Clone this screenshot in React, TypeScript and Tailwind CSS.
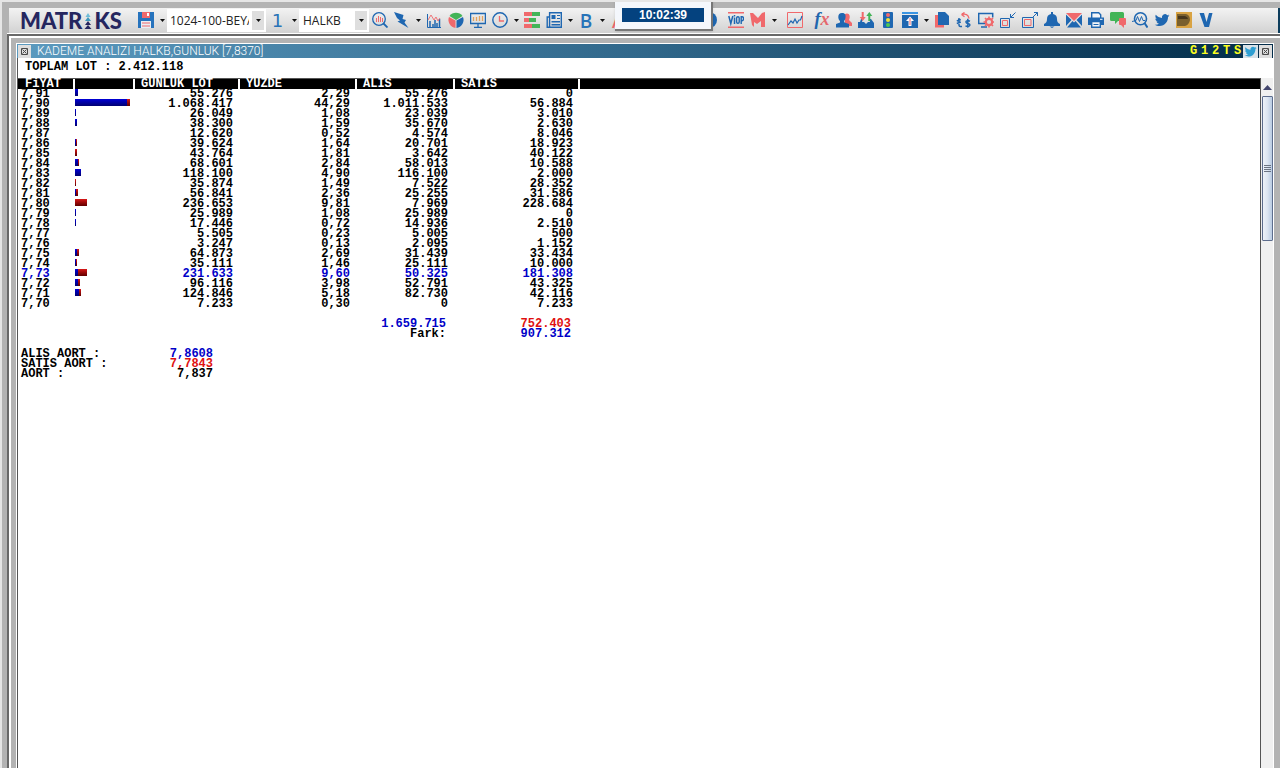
import { useState } from "react";
import type { ReactNode } from "react";

type Level = {
  price: string;
  lot: string;
  percent: string;
  buy: string;
  sell: string;
  active?: boolean;
};

const levels: Level[] = [
  { price: "7,91", lot: "55.276", percent: "2,29", buy: "55.276", sell: "0" },
  { price: "7,90", lot: "1.068.417", percent: "44,29", buy: "1.011.533", sell: "56.884" },
  { price: "7,89", lot: "26.049", percent: "1,08", buy: "23.039", sell: "3.010" },
  { price: "7,88", lot: "38.300", percent: "1,59", buy: "35.670", sell: "2.630" },
  { price: "7,87", lot: "12.620", percent: "0,52", buy: "4.574", sell: "8.046" },
  { price: "7,86", lot: "39.624", percent: "1,64", buy: "20.701", sell: "18.923" },
  { price: "7,85", lot: "43.764", percent: "1,81", buy: "3.642", sell: "40.122" },
  { price: "7,84", lot: "68.601", percent: "2,84", buy: "58.013", sell: "10.588" },
  { price: "7,83", lot: "118.100", percent: "4,90", buy: "116.100", sell: "2.000" },
  { price: "7,82", lot: "35.874", percent: "1,49", buy: "7.522", sell: "28.352" },
  { price: "7,81", lot: "56.841", percent: "2,36", buy: "25.255", sell: "31.586" },
  { price: "7,80", lot: "236.653", percent: "9,81", buy: "7.969", sell: "228.684" },
  { price: "7,79", lot: "25.989", percent: "1,08", buy: "25.989", sell: "0" },
  { price: "7,78", lot: "17.446", percent: "0,72", buy: "14.936", sell: "2.510" },
  { price: "7,77", lot: "5.505", percent: "0,23", buy: "5.005", sell: "500" },
  { price: "7,76", lot: "3.247", percent: "0,13", buy: "2.095", sell: "1.152" },
  { price: "7,75", lot: "64.873", percent: "2,69", buy: "31.439", sell: "33.434" },
  { price: "7,74", lot: "35.111", percent: "1,46", buy: "25.111", sell: "10.000" },
  { price: "7,73", lot: "231.633", percent: "9,60", buy: "50.325", sell: "181.308", active: true },
  { price: "7,72", lot: "96.116", percent: "3,98", buy: "52.791", sell: "43.325" },
  { price: "7,71", lot: "124.846", percent: "5,18", buy: "82.730", sell: "42.116" },
  { price: "7,70", lot: "7.233", percent: "0,30", buy: "0", sell: "7.233" },
];

const MAX_BAR = 55;
const toNumber = (value: string) => Number(value.replace(/\./g, ""));
const maxLot = Math.max(...levels.map((l) => toNumber(l.lot)));
const barWidth = (value: string) =>
  Math.round((toNumber(value) / maxLot) * MAX_BAR);

const BLUE = "#1f67b1";
const RED = "#f0696c";
const GREEN = "#43b457";

const Icon = ({ children }: { children: ReactNode }) => (
  <svg viewBox="0 0 16 16" className="h-4 w-4" fill="none" aria-hidden="true">
    {children}
  </svg>
);

const ToolButton = ({ label, children }: { label: string; children: ReactNode }) => (
  <button
    type="button"
    aria-label={label}
    title={label}
    className="flex h-full w-[22px] shrink-0 items-center justify-center pb-px"
  >
    <Icon>{children}</Icon>
  </button>
);

const Caret = () => (
  <svg viewBox="0 0 5 3" className="h-[3px] w-[5px]" aria-hidden="true">
    <path d="M0 0h5L2.5 3z" fill="#111" />
  </svg>
);

const MenuCaret = ({ label }: { label: string }) => (
  <button
    type="button"
    aria-label={`${label} menu`}
    className="flex h-full w-[10px] shrink-0 items-center justify-center pb-px"
  >
    <Caret />
  </button>
);

const TwitterBird = ({ color }: { color: string }) => (
  <path
    d="M15.5 3.6c-.5.3-1.100.4-1.700.5.6-.4 1-.9 1.300-1.600-.6.3-1.200.6-1.900.7A3 3 0 0 0 8 5.900C5.500 5.800 3.300 4.600 1.800 2.800c-.8 1.300-.4 3.100.9 4-.5 0-1-.2-1.400-.4 0 1.500 1 2.700 2.400 3-.4.1-.9.1-1.300 0 .4 1.200 1.500 2.100 2.800 2.100A6 6 0 0 1 .7 12.700c1.400.9 3 1.400 4.700 1.400 5.600 0 8.800-4.700 8.600-9 .6-.4 1.100-.9 1.500-1.500z"
    fill={color}
  />
);

const Logo = () => (
  <div
    aria-label="MATRIKS"
    className="flex w-[126px] shrink-0 items-center pl-[11px] font-['Lato'] text-[22px] leading-6 font-black text-[#25265f]"
  >
    <span>MATR</span>
    <svg viewBox="0 0 8 16" className="mx-0.5 h-4 w-2 shrink-0" aria-hidden="true">
      <path d="M4 0l2.500 4h-5z" fill="#6fbdd8" />
      <path d="M4 4l3 4H1z" fill="#3f98bb" />
      <path d="M4 8l3 4H1zM4 12l3.500 4h-7z" fill="#25265f" />
    </svg>
    <span>KS</span>
  </div>
);

const Toolbar = () => {
  const [page, setPage] = useState("1024-100-BEYAZ");
  const [symbol, setSymbol] = useState("HALKB");

  return (
    <header className="ml-[7px] flex h-[25px] items-center border-r-2 border-[#0d3d5c] bg-gradient-to-b from-[#f3f3f3] to-[#d2d2d2] font-['Open_Sans',sans-serif]">
      <Logo />
      <ToolButton label="Kaydet">
        <path d="M0 0h16v16H0z" fill="#2673bd" />
        <path d="M4 0h8v6H4z" fill={RED} />
        <path d="M9 1h2v3H9z" fill="#fff" />
        <path d="M3 9h10v7H3z" fill="#e9eef4" />
        <path d="M4 11h8M4 14h8" stroke={RED} strokeWidth="1" />
      </ToolButton>
      <MenuCaret label="Kaydet" />

      <div className="relative h-[23px] w-[99px] shrink-0">
        <select
          aria-label="Sayfa"
          value={page}
          onChange={(e) => setPage(e.target.value)}
          className="block h-full w-full appearance-none bg-white pr-[17px] pl-[3px] text-[12px] text-[#222]"
        >
          <option>1024-100-BEYAZ</option>
        </select>
        <span className="pointer-events-none absolute top-0.5 right-0.5 bottom-0.5 flex w-3 items-center justify-center bg-[#dedede]">
          <Caret />
        </span>
      </div>

      <button
        type="button"
        className="h-full w-[23px] shrink-0 text-center font-['DejaVu_Sans',sans-serif] text-[18px] leading-6 text-[#2873b8]"
      >
        1
      </button>
      <MenuCaret label="Sayfa no" />

      <div className="relative h-[23px] w-[70px] shrink-0">
        <select
          aria-label="Sembol"
          value={symbol}
          onChange={(e) => setSymbol(e.target.value)}
          className="block h-full w-full appearance-none bg-white pr-[17px] pl-1 text-[12px] text-[#222]"
        >
          <option>HALKB</option>
        </select>
        <span className="pointer-events-none absolute top-0.5 right-0.5 bottom-0.5 flex w-3 items-center justify-center bg-[#dedede]">
          <Caret />
        </span>
      </div>

      <ToolButton label="Ara">
        <circle cx="7" cy="7" r="6.300" stroke={BLUE} strokeWidth="1.300" />
        <path d="M11.500 11.500L15.500 15.500" stroke={BLUE} strokeWidth="1.800" />
        <path d="M4.500 6v4M6.500 4v6M8.500 5v5M10.500 6v4" stroke={RED} />
      </ToolButton>
      <ToolButton label="Hızlı emir">
        <path d="M0 0l9.500 3-1 4L12 8l-1.500 2.500 4 5.500L3.500 9.500l2.500-1L3 6z" fill={BLUE} />
      </ToolButton>
      <MenuCaret label="Hızlı emir" />
      <ToolButton label="Grafik">
        <path d="M1.500 2v13.500H15" stroke={BLUE} />
        <path d="M4 15V9M7 15v-3M9 15V8M11 15v-4M13.500 15V7" stroke={BLUE} strokeWidth="1.500" />
        <path d="M2 8l3-5 3 5 2-3 2 4 2-3" stroke={RED} strokeWidth=".9" />
      </ToolButton>
      <ToolButton label="Pasta grafik">
        <path d="M8 8L1.500 4a8 8 0 0 1 13 0z" fill={GREEN} />
        <path d="M7.500 8.500v7.400A8 8 0 0 1 1 5z" fill={RED} />
        <path d="M8.500 8.500L15 5a8 8 0 0 1-6.500 10.900z" fill={BLUE} />
      </ToolButton>
      <ToolButton label="Ekran">
        <path d="M.6 1.500h14.800v10H.6zM8 12v3M4 15.400h8" stroke={BLUE} strokeWidth="1.300" />
        <path d="M3.500 5v4M6.500 5v4M9.500 4v5M12.500 4v5" stroke="#e3a25d" strokeWidth="1.300" />
      </ToolButton>
      <ToolButton label="Saat">
        <circle cx="8" cy="8" r="7.200" stroke={BLUE} strokeWidth="1.400" />
        <path d="M7.500 4v5H12" stroke={RED} strokeWidth="1.300" />
      </ToolButton>
      <MenuCaret label="Saat" />
      <ToolButton label="Derinlik">
        <path d="M0 0h8v4H0zM0 12h8v4H0zM0 6h5v4H0z" fill={RED} />
        <path d="M8 0h8v4H8zM5 6h7v4H5zM8 12h8v4H8z" fill={GREEN} />
      </ToolButton>
      <ToolButton label="Haberler">
        <path d="M3.600.7h11.700v14.600H1.200V5h2.400zM3.600 5v10" stroke={BLUE} strokeWidth="1.400" />
        <path d="M5.500 3h4v4h-4zM11 3h3v1h-3zM11 6h3v1h-3zM5.500 9H14v1.500H5.500zM5.500 12H14v1.500H5.500z" fill={BLUE} />
      </ToolButton>
      <MenuCaret label="Haberler" />
      <button
        type="button"
        className="h-full w-[22px] shrink-0 text-center text-[19px] leading-6 font-semibold text-[#2873b8]"
      >
        B
      </button>
      <MenuCaret label="B" />
      <button
        type="button"
        className="h-full w-[22px] shrink-0 text-center text-[18px] leading-6 font-semibold text-[#f0696c]"
      >
        A
      </button>
      <div className="w-[69px] shrink-0" />
      <ToolButton label="Bilgi">
        <circle cx="8" cy="8" r="8" fill={BLUE} />
      </ToolButton>
      <div className="w-[5px] shrink-0" />
      <ToolButton label="VIOP">
        <path d="M0 0h16v1.500H0zM0 14.500h16V16H0z" fill={RED} />
        <path d="M.8 4l2 7.500L4.800 4M6.500 5.500V12M6.500 3v1.500" stroke={BLUE} strokeWidth="1.500" />
        <rect x="8.600" y="4.700" width="2.600" height="6.600" rx="1.300" stroke={BLUE} strokeWidth="1.400" />
        <path d="M13.200 12V4.700h.8a1.500 2 0 0 1 0 4h-.8" stroke={BLUE} strokeWidth="1.400" />
      </ToolButton>
      <ToolButton label="Matriks">
        <path d="M0 1h3l5 5 4-5 3-1v15h-4V9l-4 3-3-2v5l-2-2z" fill={RED} />
      </ToolButton>
      <MenuCaret label="Matriks" />
      <div className="w-[5px] shrink-0" />
      <ToolButton label="Çizgi grafik">
        <path d="M.5.500h15v15H.5z" stroke={RED} />
        <path d="M1 13l3-4 2 2 2-4 2 4 2-3 1.500 0L15 4" stroke={BLUE} strokeWidth="1.200" />
      </ToolButton>
      <div className="w-[5px] shrink-0" />
      <button
        type="button"
        className="h-full w-[22px] shrink-0 pb-1 text-center font-['Liberation_Serif',serif] text-[18px] leading-5 font-bold text-[#2166ad] italic"
      >
        f<span className="text-[#e4686d]">x</span>
      </button>
      <ToolButton label="Kullanıcılar">
        <path d="M9 2c4-2 6 2 4 6l3 3v3H9z" fill={RED} />
        <path d="M6 1c3 0 4 2 3.500 4.500C9.300 7 9 8 8 9l.5 1.500L13 12v3.500H0V12l4-1.500L4 9C2.800 8 2.300 6.500 2.300 5 2.300 2.500 3.500 1 6 1z" fill={BLUE} />
      </ToolButton>
      <ToolButton label="Al sat">
        <path d="M0 10h2l1-3h2L4 10h2l2 2 2-2h2l-1-3h2l3 4v5H0z" fill={BLUE} />
        <path d="M3.700 0h2v5h2L4.700 9l-3-4h2z" fill={RED} />
        <path d="M10.300 9h2V4h2l-3-4-3 4h2z" fill={GREEN} />
      </ToolButton>
      <ToolButton label="Trafik ışığı">
        <rect x="3" width="10" height="16" rx="1" fill={BLUE} />
        <circle cx="8" cy="3" r="2" fill={RED} />
        <circle cx="8" cy="8" r="2" fill="#f1df38" />
        <circle cx="8" cy="13" r="2" fill="#4dc951" />
      </ToolButton>
      <ToolButton label="Yükle">
        <path d="M0 0h16v2H0z" fill="#3b95e3" />
        <path d="M0 3h16v13H0z" fill={BLUE} />
        <path d="M8 4.500l4 4.500h-2.500v5h-3V9H4z" fill="#fff" />
        <path d="M8 6v7" stroke={RED} />
      </ToolButton>
      <MenuCaret label="Yükle" />
      <ToolButton label="Kopyala">
        <path d="M1 3h9v12.500H1z" fill={RED} />
        <path d="M4 0h7l4 4v9H4z" fill={BLUE} />
      </ToolButton>
      <ToolButton label="Döviz çevirici">
        <path d="M3 6v7q0 2 3 1.500M.8 9l4-1.500M.8 11.500l4-1.500" stroke={BLUE} strokeWidth="1.500" />
        <path d="M14 9.200c-5-2-5 1.800-2 2.300s2.500 4-2.500 2.500M11.800 6.800v9" stroke={BLUE} strokeWidth="1.500" />
        <path d="M5.500 2.500c4-1 7 0 7.500 4M5.500 2.500l3-2M5.500 2.500l3 2.300" stroke={RED} strokeWidth="1.400" />
      </ToolButton>
      <ToolButton label="Ekran ayarları">
        <path d="M9 11.500H.7V1.500h14v4M3 15h6" stroke={BLUE} strokeWidth="1.500" />
        <circle cx="11" cy="10" r="3.200" stroke={RED} strokeWidth="2.200" />
        <path d="M11 4.500v2M11 13.500v2M5.500 10h2M14.500 10h1.500M7 6l1.500 1.500M13.500 12.500L15 14M15 6l-1.500 1.500M8.500 12.500L7 14" stroke={RED} strokeWidth="1.600" />
      </ToolButton>
      <ToolButton label="Küçült">
        <path d="M.5 6.500h9v9h-9z" stroke={BLUE} />
        <path d="M2.500 8.500h5v5h-5z" stroke={RED} />
        <path d="M15.500.500l-5 5M10.500 2v3.500H14" stroke={BLUE} />
      </ToolButton>
      <ToolButton label="Büyüt">
        <path d="M.5 5.500h11v10H.5z" stroke={BLUE} />
        <path d="M2.500 7.500h6.500v6H2.500z" stroke={RED} />
        <path d="M10.500 5.500l5-5M12 .500h3.500V4" stroke={BLUE} />
      </ToolButton>
      <ToolButton label="Alarm">
        <path d="M7 0h2v2c3 .5 4 2.500 4 5 0 3 1 4 3 5v2H0v-2c2-1 3-2 3-5 0-2.500 1-4.500 4-5zM5.500 14.500h5L8 16z" fill={BLUE} />
      </ToolButton>
      <ToolButton label="Mesaj">
        <path d="M0 1h16L8 9z" fill={RED} />
        <path d="M0 2.500L5.500 8 0 14zM16 2.500L10.500 8 16 14zM1 15.500l5.500-6.500L8 10.500 9.500 9l5.500 6.500z" fill={BLUE} />
      </ToolButton>
      <ToolButton label="Yazdır">
        <path d="M3.700 6V.700h7l2 2V6M3.700 9.500h8.600v5.800H3.700z" fill="#f4f6f9" stroke={BLUE} strokeWidth="1.400" />
        <path d="M0 5.500h16V13h-3V9H3v4H0z" fill={BLUE} />
        <path d="M12 6.800h2.500v1H12z" fill="#fff" />
        <path d="M5.500 12.500h5" stroke={BLUE} />
      </ToolButton>
      <ToolButton label="Sohbet">
        <path d="M1.500 0h11Q14 0 14 1.500v6Q14 9 12.500 9H8l-3 3V9H1.500Q0 9 0 7.500v-6Q0 0 1.500 0z" fill={GREEN} />
        <path d="M10 6h5q1 0 1 1v5q0 1-1 1h-1v3l-3-3h-1q-1 0-1-1V7q0-1 1-1z" fill={RED} />
      </ToolButton>
      <ToolButton label="Analiz">
        <circle cx="8.500" cy="6.800" r="6" stroke={BLUE} strokeWidth="1.600" />
        <path d="M12.500 11l3 4.500" stroke={BLUE} strokeWidth="2" />
        <path d="M0 9.500l4-1 1.500-4 2 5 2-5 1.500 4h2" stroke={BLUE} />
      </ToolButton>
      <ToolButton label="Twitter">
        <TwitterBird color={BLUE} />
      </ToolButton>
      <ToolButton label="D">
        <path d="M0 0h16v16H0z" fill="#d9a343" />
        <path d="M1 2h9q4 1 4 6-1 5-5 6H1z" fill="#7a602e" />
        <path d="M2 4h7q3 1 3 3H2z" fill="#46361c" />
      </ToolButton>
      <ToolButton label="V">
        <path d="M1.500 1h4.500l2.500 9L11 1h3.500L11 15H6.500z" fill={BLUE} />
      </ToolButton>
    </header>
  );
};

const CloseButton = () => (
  <button
    type="button"
    aria-label="Kapat"
    className="flex h-[13px] w-[13px] items-center justify-center bg-[#dedede]"
  >
    <svg viewBox="0 0 7 7" className="h-[7px] w-[7px]" aria-hidden="true">
      <path d="M.5.500h6v6h-6zM1.500 1.500l4 4M5.500 1.500l-4 4" stroke="#4b4b4b" fill="none" />
    </svg>
  </button>
);

const TitleBar = () => (
  <div className="flex h-[14px] items-center bg-gradient-to-r from-[#5b9abf] via-[#30678a] to-[#032d4a] pr-px pl-px">
    <CloseButton />
    <h1 className="flex-1 pl-[6px] font-['Roboto',sans-serif] text-[12px] leading-[14px] font-light whitespace-nowrap text-white">
      KADEME ANALIZI HALKB,GÜNLÜK [7,8370]
    </h1>
    <div className="flex items-center font-['Liberation_Mono',monospace] text-[12px] leading-[14px] font-bold text-[#fbff1f]">
      {["G", "1", "2", "T", "S"].map((key) => (
        <button key={key} type="button" className="w-[11px] text-center">
          {key}
        </button>
      ))}
    </div>
    <button
      type="button"
      aria-label="Twitter'da paylaş"
      className="mr-px flex h-[13px] w-[15px] items-center justify-center bg-[#d9e2e8]"
    >
      <svg viewBox="0 0 16 16" className="h-[13px] w-[13px]" aria-hidden="true">
        <TwitterBird color="#2f9fd2" />
      </svg>
    </button>
    <CloseButton />
  </div>
);

const LotBar = ({ level }: { level: Level }) => (
  <div className="flex h-[7px]">
    <span
      className="bg-gradient-to-b from-[#0000d8] to-[#000070]"
      style={{ width: barWidth(level.buy) }}
    />
    <span
      className="bg-gradient-to-b from-[#d81818] to-[#600000]"
      style={{ width: barWidth(level.sell) }}
    />
  </div>
);

const LevelTable = () => (
  <table className="w-full table-fixed border-collapse text-right">
    <colgroup>
      <col className="w-[55px]" />
      <col className="w-[60px]" />
      <col className="w-[105px]" />
      <col className="w-[117px]" />
      <col className="w-[98px]" />
      <col className="w-[125px]" />
      <col />
    </colgroup>
    <thead>
      <tr className="h-[10px] bg-black text-left text-white">
        <th className="p-0 pl-[7px]">FiYAT</th>
        <th className="p-0">
          <div className="h-[10px] border-l-2 border-white" />
        </th>
        <th className="p-0">
          <div className="h-[10px] border-l-2 border-white pl-[6px]">GUNLUK LOT</div>
        </th>
        <th className="p-0">
          <div className="h-[10px] border-l-2 border-white pl-[6px]">YUZDE</div>
        </th>
        <th className="p-0">
          <div className="h-[10px] border-l-2 border-white pl-[6px]">ALIS</div>
        </th>
        <th className="p-0">
          <div className="h-[10px] border-l-2 border-white pl-[6px]">SATIS</div>
        </th>
        <th className="p-0">
          <div className="h-[10px] border-l-2 border-white" />
        </th>
      </tr>
    </thead>
    <tbody>
      {levels.map((level) => (
        <tr
          key={level.price}
          className={`h-[10px] ${level.active ? "text-[#0000c8]" : "text-black"}`}
        >
          <td className="p-0 pl-[3px] text-left">{level.price}</td>
          <td className="p-0 pl-[2px] align-top">
            <LotBar level={level} />
          </td>
          <td className="p-0 pr-[5px]">{level.lot}</td>
          <td className="p-0 pr-[5px]">{level.percent}</td>
          <td className="p-0 pr-[5px]">{level.buy}</td>
          <td className="p-0 pr-[5px]">{level.sell}</td>
          <td className="p-0" />
        </tr>
      ))}
    </tbody>
    <tfoot>
      <tr className="h-5 align-bottom">
        <td colSpan={4} className="p-0" />
        <td className="p-0 pr-[7px] text-[#0000c8]">1.659.715</td>
        <td className="p-0 pr-[7px] text-[#e01010]">752.403</td>
      </tr>
      <tr className="h-[10px]">
        <td colSpan={4} className="p-0" />
        <td className="p-0 pr-[7px]">Fark:</td>
        <td className="p-0 pr-[7px] text-[#0000c8]">907.312</td>
      </tr>
      <tr className="h-5 align-bottom">
        <td colSpan={2} className="p-0 pl-[3px] text-left">ALIS AORT :</td>
        <td className="p-0 pr-[25px] text-[#0000c8]">7,8608</td>
      </tr>
      <tr className="h-[10px]">
        <td colSpan={2} className="p-0 pl-[3px] text-left">SATIS AORT :</td>
        <td className="p-0 pr-[25px] text-[#e01010]">7,7843</td>
      </tr>
      <tr className="h-[10px]">
        <td colSpan={2} className="p-0 pl-[3px] text-left">AORT :</td>
        <td className="p-0 pr-[25px]">7,837</td>
      </tr>
    </tfoot>
  </table>
);

const ScrollBar = () => (
  <div className="flex w-3 shrink-0 flex-col items-center bg-[#f0f0f0]">
    <button
      type="button"
      aria-label="Yukarı kaydır"
      className="flex h-[18px] w-full items-center justify-center"
    >
      <svg viewBox="0 0 9 5" className="h-[5px] w-[9px]" aria-hidden="true">
        <path d="M4.500 0L9 5H0z" fill="#43466d" />
      </svg>
    </button>
    <div className="flex h-[145px] w-[11px] flex-col items-center justify-center gap-px rounded-[1px] border border-[#5d6d8d] bg-gradient-to-r from-[#eef2f8] via-[#dce5f1] to-[#b9cbe2]">
      <span className="h-px w-[7px] bg-[#6c7482]" />
      <span className="h-px w-[7px] bg-[#6c7482]" />
      <span className="h-px w-[7px] bg-[#6c7482]" />
      <span className="h-px w-[7px] bg-[#6c7482]" />
    </div>
  </div>
);

const App = () => {
  return (
    <div className="relative flex min-h-screen flex-col overflow-hidden border-t-2 border-l-2 border-[#e6e6e6] bg-[#b3b3b3] pt-[6px]">
      <Toolbar />
      <div className="ml-[5px] h-px bg-white" />

      {/* Workspace frame */}
      <div className="ml-[5px] flex flex-1 flex-col border-t-2 border-l-2 border-[#696969]">
        <div className="flex flex-1 flex-col border-t-2 border-l-2 border-white pt-[5px] pr-[6px] pl-[5px]">
          <main className="flex flex-1 flex-col border-t border-r border-l border-white bg-white">
            <TitleBar />
            <div className="flex flex-1 flex-col border-l border-[#555] font-['Liberation_Mono',monospace] text-[12px] leading-[10px] font-bold text-black">
              <p className="h-5 pt-[4px] pl-[7px]">TOPLAM LOT : 2.412.118</p>
              <div className="flex flex-1">
                <div className="min-w-0 flex-1 border-t border-r border-[#555]">
                  <LevelTable />
                </div>
                <ScrollBar />
              </div>
            </div>
          </main>
        </div>
      </div>

      {/* Floating clock */}
      <div className="absolute top-[-2px] left-[613px] flex h-[31px] w-[98px] items-center justify-center border-r-2 border-b-2 border-[#777] bg-[#f4f7fc] shadow-sm">
        <time className="h-[14px] w-[82px] bg-[#04427f] text-center font-['Liberation_Sans',sans-serif] text-[12px] leading-[14px] font-bold text-white">
          10:02:39
        </time>
      </div>
    </div>
  );
};

export default App;
